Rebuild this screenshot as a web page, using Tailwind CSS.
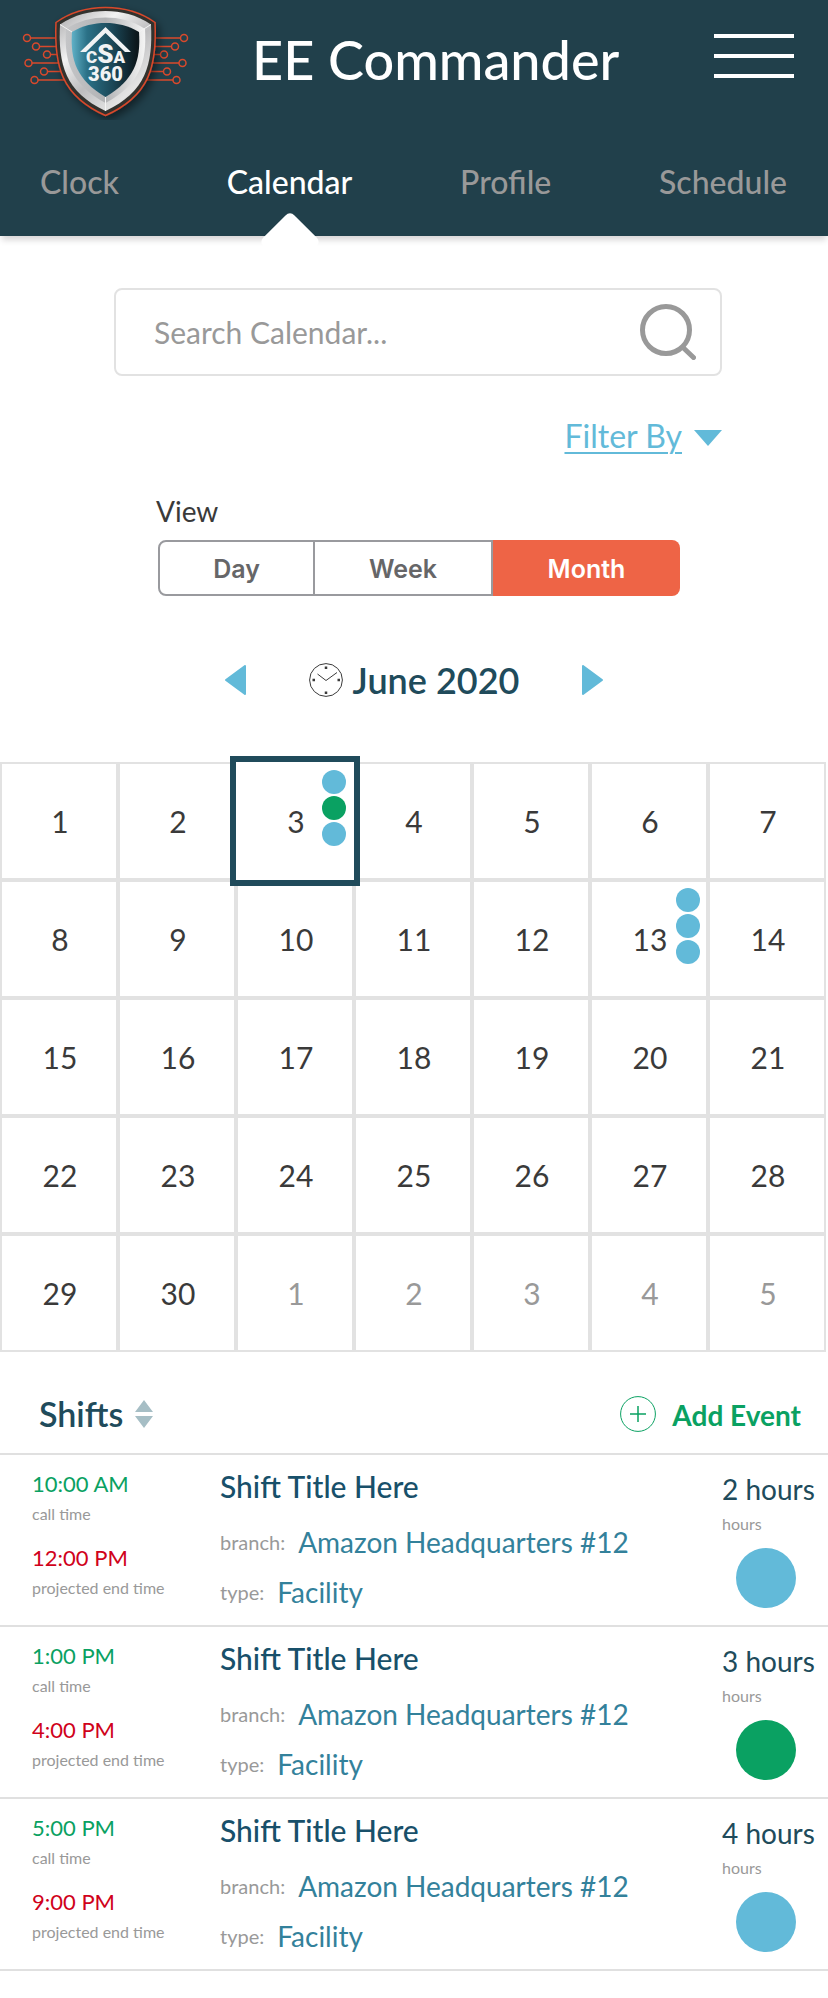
<!DOCTYPE html>
<html lang="en">
<head>
  <meta charset="UTF-8" />
  <meta name="viewport" content="width=device-width, initial-scale=1.0" />
  <title>Calendar | EE Commander</title>
  <script src="https://cdn.jsdelivr.net/npm/@tailwindcss/browser@4"></script>
</head>
<body class="bg-white text-[#3a3a3a] font-[Lato,sans-serif]">
  <header class="relative z-10 bg-[#21404b] shadow-[0_6px_6px_-2px_rgba(60,50,55,0.2)]">
    <div class="flex items-center h-[120px]">
      <a href="#" aria-label="CSA 360 home" class="shrink-0">
        <svg class="w-[196px] h-[120px]" viewBox="0 0 196 120" fill="none">
          <defs>
            <linearGradient id="steel" x1="60" y1="10" x2="150" y2="110" gradientUnits="userSpaceOnUse">
              <stop offset="0" stop-color="#a9a9ab" />
              <stop offset="0.3" stop-color="#f2f2f2" />
              <stop offset="0.55" stop-color="#bdbdbf" />
              <stop offset="0.8" stop-color="#e4e4e4" />
              <stop offset="1" stop-color="#9a9a9c" />
            </linearGradient>
            <linearGradient id="steelInner" x1="66" y1="0" x2="145" y2="0" gradientUnits="userSpaceOnUse">
              <stop offset="0" stop-color="#c4c5c7" />
              <stop offset="0.5" stop-color="#b2b3b5" />
              <stop offset="1" stop-color="#f4f4f4" />
            </linearGradient>
            <linearGradient id="core" x1="72" y1="0" x2="140" y2="0" gradientUnits="userSpaceOnUse">
              <stop offset="0" stop-color="#5fb0c6" />
              <stop offset="0.22" stop-color="#2b7187" />
              <stop offset="0.6" stop-color="#1b4757" />
              <stop offset="0.95" stop-color="#0c171c" />
            </linearGradient>
            <filter id="drop" x="-20%" y="-20%" width="150%" height="150%">
              <feDropShadow dx="3" dy="4" stdDeviation="4" flood-color="#000" flood-opacity="0.5" />
            </filter>
          </defs>
          <g stroke="#d9492c" stroke-width="1.500">
            <path d="M30.500 38H56M39.500 46.500H56M50.500 54.500H57M32 63H59M47.500 71.500H62M38 80H66" />
            <path d="M180.500 38H154M171.500 46.500H154M160.500 54.500H153M179 63H152M163.500 71.500H149M173 80H145" />
            <circle cx="27" cy="38" r="3.500" /><circle cx="36" cy="46.500" r="3.500" /><circle cx="47" cy="54.500" r="3.500" />
            <circle cx="28.500" cy="63" r="3.500" /><circle cx="44" cy="71.500" r="3.500" /><circle cx="34.500" cy="80" r="3.500" />
            <circle cx="184" cy="38" r="3.500" /><circle cx="175" cy="46.500" r="3.500" /><circle cx="164" cy="54.500" r="3.500" />
            <circle cx="182.500" cy="63" r="3.500" /><circle cx="167" cy="71.500" r="3.500" /><circle cx="176.500" cy="80" r="3.500" />
          </g>
          <path filter="url(#drop)" d="M56 22.500C72 11 88 7.500 105.500 7.500S139 11 155 22.500C157 65 150 96 105.500 115.500C61 96 54 65 56 22.500Z" fill="#33302f" stroke="#d9492c" stroke-width="1.500" />
          <path d="M60 24.500C75 14.500 90 11 105.500 11S136 14.500 151 24.500C153 64 146 92 105.500 111C65 92 58 64 60 24.500Z" fill="url(#steel)" />
          <path d="M66 29C79 20.500 92 17.500 105.500 17.500S132 20.500 145 29C147 62 140 84 105.500 103C71 84 64 62 66 29Z" fill="url(#steelInner)" />
          <path d="M105.500 97V111M60 24.500 72 32M151 24.500 139 32" stroke="#f4f4f4" />
          <path d="M72 32C83 25.500 94 23 105.500 23S128 25.500 139 32C141 61 134 80 105.500 97C77 80 70 61 72 32Z" fill="url(#core)" />
          <path d="M105.500 27 131 52H125L105.500 33 86 52H80Z" fill="#f1f3f4" />
          <g fill="#f1f3f4" font-family="Roboto, sans-serif" font-weight="900" text-anchor="middle">
            <text x="105.500" y="63" font-size="17">C<tspan font-size="26">S</tspan>A</text>
            <text x="105.500" y="81" font-size="20">360</text>
          </g>
        </svg>
      </a>
      <h1 class="ml-14 text-[54px] leading-[60px] font-medium text-white whitespace-nowrap">EE Commander</h1>
      <button type="button" aria-label="Open menu" class="mb-2 ml-auto mr-[34px] flex w-20 flex-col gap-4">
        <span class="h-1 w-full bg-white"></span>
        <span class="h-1 w-full bg-white"></span>
        <span class="h-1 w-full bg-white"></span>
      </button>
    </div>
    <nav class="flex justify-between pl-10 pr-[41px] pt-[42px] h-[116px] text-[32px] leading-10 font-medium text-[#999999]">
      <a href="#">Clock</a>
      <a href="#" aria-current="page" class="relative text-white">
        <span class="relative z-10">Calendar</span>
        <span class="absolute left-1/2 top-[58px] size-11 -translate-x-1/2 rotate-45 rounded-md bg-white"></span>
      </a>
      <a href="#">Profile</a>
      <a href="#">Schedule</a>
    </nav>
  </header>

  <main>
    <section class="flex flex-col pl-[114px] pr-[106px] pt-[52px]">
      <form role="search" class="flex h-[88px] items-center rounded-lg border-2 border-[#e2e2e2] pl-[38px] pr-6">
        <input type="search" aria-label="Search calendar" placeholder="Search Calendar..." class="min-w-0 flex-1 text-[30px] leading-10 outline-none placeholder:text-[#999999]" />
        <button type="submit" aria-label="Search">
          <svg class="size-14" viewBox="0 0 56 56" fill="none" stroke="#999999" stroke-width="5" stroke-linecap="round">
            <circle cx="26" cy="26" r="23.500" />
            <path d="M43 43.500 53.500 53.500" />
          </svg>
        </button>
      </form>
      <button type="button" class="mt-10 flex items-center gap-3 self-end text-[32px] leading-10 text-[#62bad9]">
        <span class="underline decoration-2 underline-offset-4">Filter By</span>
        <svg class="mt-1 h-4 w-7" viewBox="0 0 28 16" fill="currentColor"><path d="M0 0H28L14 16Z" /></svg>
      </button>

      <div class="mt-[35px] px-[42px]">
        <h2 id="view-label" class="text-[28px] leading-10">View</h2>
        <div role="group" aria-labelledby="view-label" class="mt-[9px] ml-0.5 flex h-14 rounded-lg font-[Inter,sans-serif] text-[25px] font-semibold text-[#666668]">
          <button type="button" class="w-[157px] rounded-l-lg border-2 border-[#999a9e] pt-1">Day</button>
          <button type="button" class="w-[178px] border-y-2 border-r-2 border-[#999a9e] pt-1">Week</button>
          <button type="button" aria-pressed="true" class="flex-1 rounded-r-lg bg-[#ee6446] pt-1 text-white">Month</button>
        </div>
      </div>
    </section>

    <div class="mt-16 flex h-10 items-center justify-center text-[#62bad9]">
      <button type="button" aria-label="Previous month">
        <svg class="h-[30px] w-[21px]" viewBox="0 0 21 30" fill="currentColor" stroke="currentColor" stroke-width="2" stroke-linejoin="round"><path d="M20 1V29L1 15Z" /></svg>
      </button>
      <div class="mx-[63px] flex items-center gap-2.5">
        <svg class="size-[34px]" viewBox="0 0 34 34" fill="none" stroke="#3a3a3a">
          <circle cx="17" cy="17" r="16.400" />
          <path d="M8.500 11 17 17.500 28 9.500" />
          <path d="M17 3.500V6M17 28.500V31M3.500 17H6M28.500 17H31" stroke-width="2.500" />
        </svg>
        <h2 class="text-4xl leading-10 font-semibold text-[#204b5b]">June 2020</h2>
      </div>
      <button type="button" aria-label="Next month">
        <svg class="h-[30px] w-[21px]" viewBox="0 0 21 30" fill="currentColor" stroke="currentColor" stroke-width="2" stroke-linejoin="round"><path d="M1 1V29L20 15Z" /></svg>
      </button>
    </div>

    <div id="calendar" class="mt-[62px] mr-0.5 grid grid-cols-7">
      <!-- Days will be injected here -->
    </div>

    <section>
      <div class="flex h-[103px] items-center justify-between border-b-2 border-[#e0e0e0] pl-[39px] pr-[27px] pt-[22px]">
        <button type="button" class="flex items-center gap-3">
          <span class="text-[34px] leading-10 font-semibold text-[#204b5b]">Shifts</span>
          <svg class="h-7 w-[18px]" viewBox="0 0 18 28" fill="#a6bec5"><path d="M9 0 18 12H0ZM0 16H18L9 28Z" /></svg>
        </button>
        <button type="button" class="flex items-center gap-4 text-[#0aa162]">
          <svg class="size-9" viewBox="0 0 36 36" fill="none" stroke="currentColor"><circle cx="18" cy="18" r="17.400" /><path d="M10 18H26M18 10V26" stroke-width="1.500" /></svg>
          <span class="pt-0.5 text-[28px] leading-10 font-bold">Add Event</span>
        </button>
      </div>
      <ul id="shifts">
        <!-- Shifts will be injected here -->
      </ul>
    </section>
  </main>

  <script>
  const events = {
    3: ['bg-[#62bad9]', 'bg-[#0aa162]', 'bg-[#62bad9]'],
    13: ['bg-[#62bad9]', 'bg-[#62bad9]', 'bg-[#62bad9]']
  };

  const shifts = [
    { start: '10:00 AM', end: '12:00 PM', hours: 2, color: 'bg-[#62bad9]' },
    { start: '1:00 PM', end: '4:00 PM', hours: 3, color: 'bg-[#0aa162]' },
    { start: '5:00 PM', end: '9:00 PM', hours: 4, color: 'bg-[#62bad9]' }
  ];

  function renderCalendar() {
    const container = document.getElementById('calendar');
    for (let i = 1; i <= 35; i++) {
      const inMonth = i <= 30;
      const day = inMonth ? i : i - 30;
      const dots = (inMonth && events[day] || [])
        .map(color => `<span class="size-6 rounded-full ${color}"></span>`)
        .join('');
      const outline = i === 3 ? 'outline-6 outline-[#204b5b] z-10 bg-white' : 'border-2 border-[#e2e2e2]';
      const dayHTML = `
        <button type="button" class="relative aspect-square pl-0.5 text-[30px] ${outline} ${inMonth ? 'text-[#3a3a3a]' : 'text-[#999999]'}">
          ${day}
          <span class="absolute ${i === 3 ? 'right-2 top-2' : 'right-1.5 top-1.5'} flex flex-col gap-0.5">${dots}</span>
        </button>
      `;
      container.insertAdjacentHTML('beforeend', dayHTML);
    }
  }

  function renderShifts() {
    const container = document.getElementById('shifts');
    shifts.forEach(shift => {
      const shiftHTML = `
        <li class="flex h-[172px] border-b-2 border-[#e0e0e0] pl-8">
          <div class="w-[188px] shrink-0 pt-[15px]">
            <p class="text-[22px] leading-7 text-[#0aa162]">${shift.start}</p>
            <p class="mt-0.5 text-base leading-7 text-[#999999]">call time</p>
            <p class="mt-4 text-[22px] leading-7 text-[#d0021b]">${shift.end}</p>
            <p class="mt-0.5 text-base leading-7 text-[#999999]">projected end time</p>
          </div>
          <div class="flex-1 pt-[11px]">
            <h3 class="text-[30px] leading-10 font-medium text-[#18506a]">Shift Title Here</h3>
            <p class="mt-4 flex items-center gap-[13px] text-xl leading-10 text-[#999999]">branch: <a href="#" class="text-[28px] leading-10 text-[#33819b]">Amazon Headquarters #12</a></p>
            <p class="mt-2.5 flex items-center gap-[13px] text-xl leading-10 text-[#999999]">type: <a href="#" class="text-[28px] leading-10 text-[#33819b]">Facility</a></p>
          </div>
          <div class="w-[106px] shrink-0 pt-3.5">
            <p class="text-[28px] leading-10 text-[#204b5b]">${shift.hours} hours</p>
            <p class="text-base leading-[30px] text-[#999999]">hours</p>
            <div class="mt-[9px] ml-3.5 size-15 rounded-full ${shift.color}"></div>
          </div>
        </li>
      `;
      container.insertAdjacentHTML('beforeend', shiftHTML);
    });
  }

  document.addEventListener('DOMContentLoaded', () => {
    renderCalendar();
    renderShifts();
  });
  </script>
</body>
</html>
